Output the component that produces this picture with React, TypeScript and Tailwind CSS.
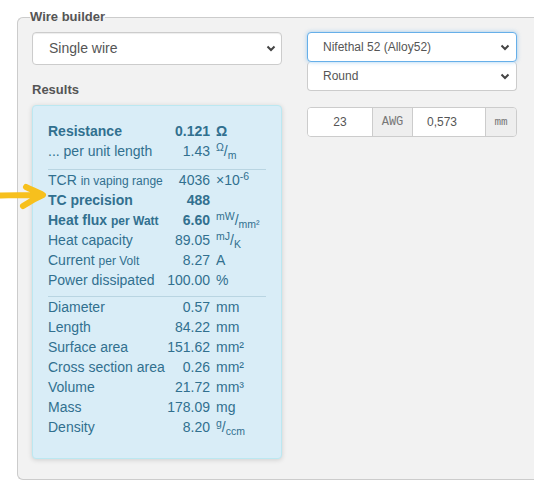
import React from 'react'

type Row = {
  label: React.ReactNode
  value: string
  unit?: React.ReactNode
  bold?: boolean
}

const sectionA: Row[] = [
  { label: 'Resistance', value: '0.121', unit: 'Ω', bold: true },
  {
    label: '... per unit length',
    value: '1.43',
    unit: (
      <>
        <sup>Ω</sup>/<sub>m</sub>
      </>
    ),
  },
]

const sectionB: Row[] = [
  {
    label: (
      <>
        TCR <span className="text-[12px]">in vaping range</span>
      </>
    ),
    value: '4036',
    unit: (
      <>
        ×10<sup>-6</sup>
      </>
    ),
  },
  { label: 'TC precision', value: '488', bold: true },
  {
    label: (
      <>
        <b>Heat flux</b> <span className="text-[12px] font-bold">per Watt</span>
      </>
    ),
    value: '6.60',
    unit: (
      <>
        <sup>mW</sup>/<sub>mm²</sub>
      </>
    ),
  },
  {
    label: 'Heat capacity',
    value: '89.05',
    unit: (
      <>
        <sup>mJ</sup>/<sub>K</sub>
      </>
    ),
  },
  {
    label: (
      <>
        Current <span className="text-[12px]">per Volt</span>
      </>
    ),
    value: '8.27',
    unit: 'A',
  },
  { label: 'Power dissipated', value: '100.00', unit: '%' },
]

const sectionC: Row[] = [
  { label: 'Diameter', value: '0.57', unit: 'mm' },
  { label: 'Length', value: '84.22', unit: 'mm' },
  { label: 'Surface area', value: '151.62', unit: 'mm²' },
  { label: 'Cross section area', value: '0.26', unit: 'mm²' },
  { label: 'Volume', value: '21.72', unit: 'mm³' },
  { label: 'Mass', value: '178.09', unit: 'mg' },
  {
    label: 'Density',
    value: '8.20',
    unit: (
      <>
        <sup>g</sup>/<sub>ccm</sub>
      </>
    ),
  },
]

function Chevron() {
  return (
    <svg width="10" height="7" viewBox="0 0 10 7" className="shrink-0">
      <path d="M1.5 1.5 L5 5 L8.5 1.5" fill="none" stroke="#444" strokeWidth="2" />
    </svg>
  )
}

function ResultRows({ rows }: { rows: Row[] }) {
  return (
    <div>
      {rows.map((r, i) => (
        <div key={i} className={`flex h-[20px] leading-[20px] overflow-visible ${r.bold ? 'font-bold' : ''}`}>
          <div className="flex-1 whitespace-nowrap">{r.label}</div>
          <div className={`text-right ${r.value === '6.60' ? 'font-bold' : ''}`}>{r.value}</div>
          <div className={`w-[56px] pl-[6px] whitespace-nowrap ${r.value === '6.60' ? 'font-normal' : ''}`}>
            {r.unit}
          </div>
        </div>
      ))}
    </div>
  )
}

export default function App() {
  return (
    <div className="relative w-[534px] h-[482px] overflow-hidden bg-white font-['Liberation_Sans',Arial,sans-serif]">
      <fieldset className="ml-[17px] mt-[9px] border-l border-t border-b border-[#cccccc] rounded-tl-[6px] rounded-bl-[6px] bg-[#f2f2f2] pl-[14px] pt-[7px] pb-[20px]">
        <legend className="-ml-[2px] text-[13px] leading-[16px] font-bold text-[#555]">Wire builder</legend>

        <div className="flex gap-[25px]">
          {/* left column */}
          <div className="w-[250px]">
            <div className="h-[33px] flex items-center justify-between pl-[16px] pr-[5px] bg-white border border-[#cccccc] rounded-[4px] shadow-[inset_0_1px_1px_rgba(0,0,0,0.075)] text-[14px] text-[#555]">
              <span>Single wire</span>
              <Chevron />
            </div>

            <div className="mt-[17px] text-[13px] leading-[16px] font-bold text-[#555]">Results</div>

            <div className="mt-[7px] bg-[#d9edf7] border border-[#bce8f1] rounded-[4px] shadow-[0_1px_5px_rgba(0,0,0,0.15)] pt-[15px] px-[15px] pb-[21px] text-[14px] text-[#31708f]">
              <ResultRows rows={sectionA} />
              <div className="mt-[8px] border-t border-[#b9d5e2]" />
              <ResultRows rows={sectionB} />
              <div className="mt-[6px] border-t border-[#b9d5e2]" />
              <ResultRows rows={sectionC} />
            </div>
          </div>

          {/* right column */}
          <div className="w-[210px] text-[12px] text-[#555]">
            <div className="relative z-10 h-[30px] flex items-center justify-between pl-[15px] pr-[6px] bg-white border border-[#66afe9] rounded-[4px] shadow-[0_0_4px_rgba(102,175,233,0.6)]">
              <span>Nifethal 52 (Alloy52)</span>
              <Chevron />
            </div>
            <div className="h-[29px] flex items-center justify-between pl-[15px] pr-[6px] bg-white border border-[#cccccc] border-t-0 rounded-[4px]">
              <span>Round</span>
              <Chevron />
            </div>

            <div className="mt-[16px] h-[30px] flex rounded-[4px] border border-[#cccccc] overflow-hidden">
              <div className="w-[64px] flex items-center justify-center bg-white">23</div>
              <div className="w-[41px] flex items-center justify-center bg-[#eeeeee] border-x border-[#cccccc] font-['Liberation_Mono',monospace] text-[12px] text-[#777]">
                AWG
              </div>
              <div className="w-[72px] flex items-center pl-[14px] bg-white">0,573</div>
              <div className="flex-1 flex items-center justify-center bg-[#eeeeee] border-l border-[#cccccc] font-['Liberation_Mono',monospace] text-[11px] text-[#777]">
                mm
              </div>
            </div>
          </div>
        </div>
      </fieldset>

      {/* hand-drawn yellow arrow */}
      <svg className="absolute left-0 top-[183px]" width="48" height="30" viewBox="0 0 48 30">
        <path
          d="M1 12.5 C14 12 26 12 42 12 M26 4 C32 7 38 9 43 12 C36 15 29 19 23 23"
          fill="none"
          stroke="#f7c01d"
          strokeWidth="6"
          strokeLinecap="round"
          strokeLinejoin="round"
        />
      </svg>
    </div>
  )
}
